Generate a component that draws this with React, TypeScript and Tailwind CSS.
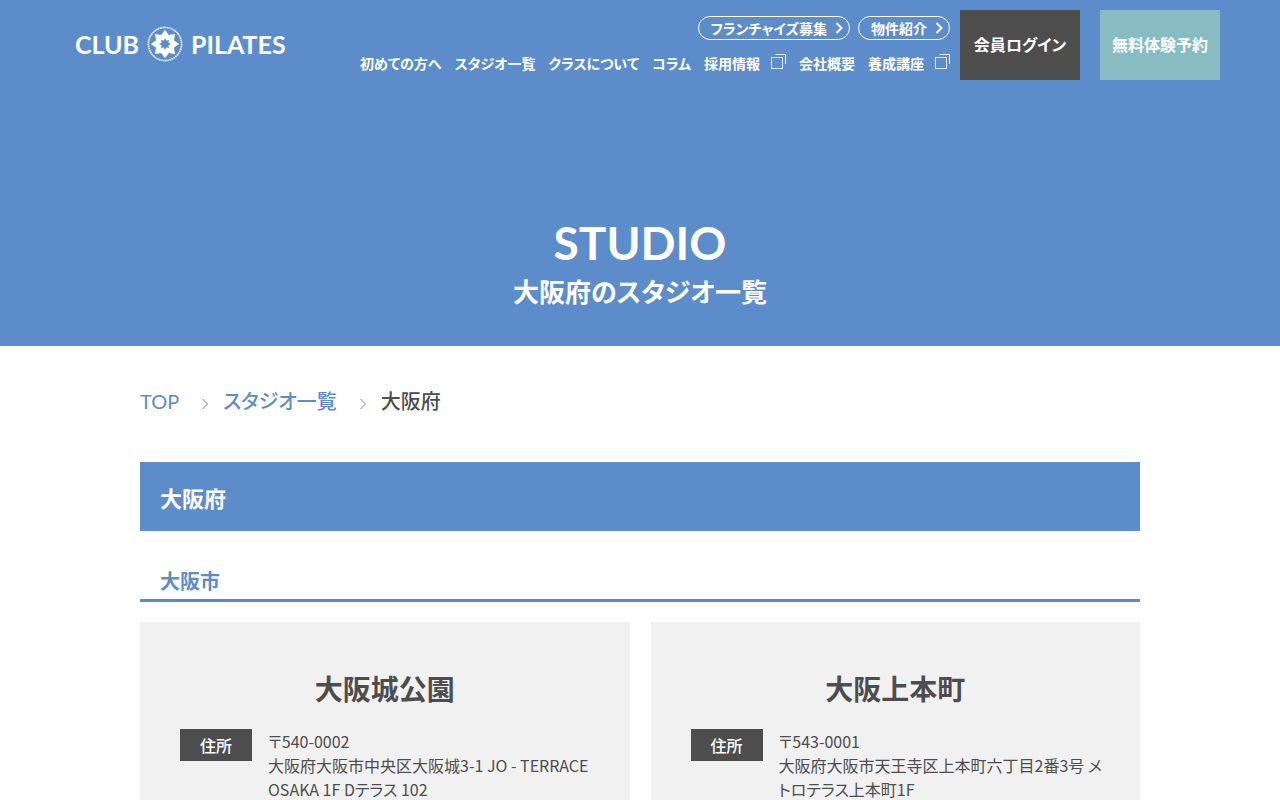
import React from 'react';

function LogoMark() {
  return (
    <svg viewBox="0 0 36 36" className="size-9 shrink-0" aria-hidden="true">
      <circle cx="18" cy="18" r="16.6" fill="none" stroke="#fff" strokeWidth="1.6" strokeDasharray="1.7 0.5" opacity="0.9" />
      <g fill="#fff">
        {[0, 45, 90, 135, 180, 225, 270, 315].map((angle) => (
          <path key={angle} d="M18 3.8 L22.8 10.6 L18 18 L13.2 10.6 Z" transform={`rotate(${angle} 18 18)`} />
        ))}
      </g>
      <g fill="#5c8cca">
        {[0, 45, 90, 135, 180, 225, 270, 315].map((angle) => (
          <path key={angle} d="M18 12 L20 16 L18 18 L16 16 Z" transform={`rotate(${angle} 18 18)`} />
        ))}
      </g>
    </svg>
  );
}

function Chevron({ className }: { className: string }) {
  return (
    <svg viewBox="0 0 8 12" className={className} fill="none" stroke="currentColor" aria-hidden="true">
      <path d="M1.5 1 L6.5 6 L1.5 11" />
    </svg>
  );
}

function ExternalIcon() {
  return (
    <svg viewBox="0 0 16 16" className="mt-0.5 size-4 shrink-0" fill="none" stroke="#fff" aria-hidden="true">
      <rect x="1.5" y="4.5" width="11" height="11" strokeOpacity="0.8" />
      <path d="M5.5 1.5 H15.5 V11" strokeOpacity="0.9" />
    </svg>
  );
}

const navItems = [
  { label: '初めての方へ' },
  { label: 'スタジオ一覧' },
  { label: 'クラスについて' },
  { label: 'コラム' },
  { label: '採用情報', external: true },
  { label: '会社概要' },
  { label: '養成講座', external: true },
];

const studios = [
  { name: '大阪城公園', zip: '〒540-0002', address: '大阪府大阪市中央区大阪城3-1 JO - TERRACE OSAKA 1F Dテラス 102' },
  { name: '大阪上本町', zip: '〒543-0001', address: '大阪府大阪市天王寺区上本町六丁目2番3号 メトロテラス上本町1F' },
];

function PillLink({ children }: { children: React.ReactNode }) {
  return (
    <a href="#" className="flex h-6 items-center gap-2 rounded-full border border-white pl-3 pr-1.5 text-sm">
      {children}
      <Chevron className="h-3 w-2 stroke-2" />
    </a>
  );
}

function Header() {
  return (
    <header className="flex items-start justify-between pl-[75px] pr-15 pt-2.5 font-bold text-white">
      <a href="#" className="mt-4 flex items-center gap-2 font-['Lato',sans-serif] text-[25px] leading-9" aria-label="CLUB PILATES">
        <span>CLUB</span>
        <LogoMark />
        <span>PILATES</span>
      </a>
      <div className="flex items-start">
        <div className="mr-2.5 flex flex-col items-end gap-[11px] pt-1.5">
          <div className="flex gap-2">
            <PillLink>フランチャイズ募集</PillLink>
            <PillLink>物件紹介</PillLink>
          </div>
          <nav className="flex gap-[13px] text-sm leading-6">
            {navItems.map((item) => (
              <a key={item.label} href="#" className="flex gap-2.5 whitespace-nowrap">
                {item.label}
                {item.external && <ExternalIcon />}
              </a>
            ))}
          </nav>
        </div>
        <div className="flex gap-5">
          <a href="#" className="flex h-[70px] w-30 items-center justify-center bg-[#4d4d4d] pb-0.5 text-base">会員ログイン</a>
          <a href="#" className="flex h-[70px] w-30 items-center justify-center bg-[#87bdc2] pb-0.5 text-base">無料体験予約</a>
        </div>
      </div>
    </header>
  );
}

function StudioCard({ name, zip, address }: { name: string; zip: string; address: string }) {
  return (
    <article className="bg-[#f1f1f1] px-8 pb-10 pt-11">
      <h4 className="text-center text-[28px] font-bold leading-11">{name}</h4>
      <dl className="mt-[19px] flex items-start gap-4 pl-2">
        <dt className="w-18 shrink-0 bg-[#4d4d4d] text-center text-base font-medium leading-8 text-white">住所</dt>
        <dd className="text-base leading-6">
          {zip}
          <br />
          {address}
        </dd>
      </dl>
    </article>
  );
}

export default function App() {
  return (
    <div className="min-h-screen bg-white font-['Noto_Sans_CJK_JP',sans-serif] text-[#4d4d4d] [font-feature-settings:'palt']">
      <div className="bg-[#5c8cca] pb-[37px]">
        <Header />
        <h1 className="mt-[133px] flex flex-col items-center text-white">
          <span className="font-['Lato',sans-serif] text-[46px] font-bold leading-15">STUDIO</span>
          <span className="text-[26px] font-bold leading-9">大阪府のスタジオ一覧</span>
        </h1>
      </div>
      <main className="mx-auto max-w-[1000px]">
        <nav aria-label="breadcrumb" className="pt-[39px]">
          <ol className="flex items-center text-xl font-medium leading-8">
            <li><a href="#" className="font-['Lato',sans-serif] font-normal text-[#5c8cca]">TOP</a></li>
            <li aria-hidden="true" className="ml-[22px] mr-[14px] mt-1.5"><Chevron className="h-3 w-2 text-[#888]" /></li>
            <li><a href="#" className="text-[#5c8cca]">スタジオ一覧</a></li>
            <li aria-hidden="true" className="ml-[22px] mr-[14px] mt-1.5"><Chevron className="h-3 w-2 text-[#888]" /></li>
            <li>大阪府</li>
          </ol>
        </nav>
        <h2 className="mt-[45px] bg-[#5c8cca] px-5 pb-[15px] pt-[17px] text-[22px] font-bold leading-[37px] text-white">大阪府</h2>
        <h3 className="mt-8 border-b-3 border-[#6389c1] px-5 text-xl font-bold leading-9 text-[#5c8cca]">大阪市</h3>
        <div className="mt-5 grid grid-cols-2 gap-[21px]">
          {studios.map((studio) => (
            <StudioCard key={studio.name} {...studio} />
          ))}
        </div>
      </main>
    </div>
  );
}
